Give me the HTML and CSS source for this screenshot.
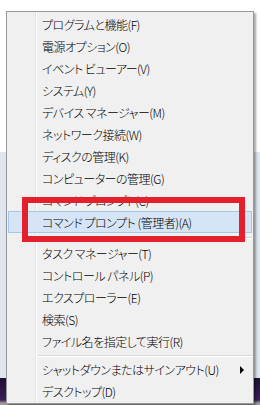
FILE: index.html
```html
<!DOCTYPE html>
<html lang="ja">
<head>
    <meta charset="UTF-8">
    <meta name="viewport" content="width=device-width, initial-scale=1.0">
    <title>クイック リンク メニュー</title>
    <link rel="stylesheet" href="styles.css">
</head>
<body>
    <div class="menu">
        <ul class="group">
            <li class="item">プログラムと機能(F)</li>
            <li class="item">電源オプション(O)</li>
            <li class="item">イベント ビューアー(V)</li>
            <li class="item">システム(Y)</li>
            <li class="item">デバイス マネージャー(M)</li>
            <li class="item">ネットワーク接続(W)</li>
            <li class="item">ディスクの管理(K)</li>
            <li class="item">コンピューターの管理(G)</li>
            <li class="item">コマンド プロンプト(C)</li>
            <li class="item selected">コマンド プロンプト (管理者)(A)</li>
        </ul>
        <div class="separator"></div>
        <ul class="group">
            <li class="item">タスク マネージャー(T)</li>
            <li class="item">コントロール パネル(P)</li>
            <li class="item">エクスプローラー(E)</li>
            <li class="item">検索(S)</li>
            <li class="item">ファイル名を指定して実行(R)</li>
        </ul>
        <div class="separator last"></div>
        <ul class="group">
            <li class="item submenu">シャットダウンまたはサインアウト(U)<span class="arrow"></span></li>
            <li class="item">デスクトップ(D)</li>
        </ul>
        <!-- annotation drawn over the screenshot -->
        <div class="highlight-box"></div>
    </div>
</body>
</html>
```

FILE: styles.css
```css
html, body {
    margin: 0;
    height: 405px;
    overflow: hidden;
}
body {
    padding: 11px 0 0 6px;
    box-sizing: border-box;
    font-family: "Noto Sans CJK JP", "Noto Sans", sans-serif;
    font-size: 12px;
    font-weight: 300;
    font-feature-settings: "palt";
    letter-spacing: -0.5px;
    color: #000;
    background: linear-gradient(to bottom, #fff 0, #fff 152px, #dfe5ec 152px, #dfe5ec 378px, #1c1030 378px, #3a1e5a 400px, #9a9a9a 403px);
}
.menu {
    position: relative;
    width: 248px;
    box-sizing: border-box;
    background: #f0f0f0;
    border: 1px solid #979797;
    padding: 1px;
    box-shadow: 2px 2px 2px rgba(0,0,0,0.35);
    background-image: linear-gradient(to right, transparent 28px, #e2e3e3 28px, #e2e3e3 29px, #fff 29px, #fff 30px, transparent 30px);
}
.group {
    list-style: none;
    margin: 0;
    padding: 0;
}
.item {
    position: relative;
    height: 22px;
    line-height: 21px;
    padding-left: 33px;
    white-space: nowrap;
    border: 1px solid transparent;
    box-sizing: border-box;
}
.item.selected {
    background: #d5e5f6;
    border-color: #a3c6ea;
}
.separator {
    height: 0;
    margin: 4px 0 3px 30px;
    border-top: 1px solid #d7d7d7;
    border-bottom: 1px solid #fff;
}
.separator.last {
    margin: 3px 0 1px 30px;
}
.arrow {
    position: absolute;
    right: 7px;
    top: 7px;
    width: 0;
    height: 0;
    border-top: 4px solid transparent;
    border-bottom: 4px solid transparent;
    border-left: 4px solid #000;
}
.highlight-box {
    position: absolute;
    left: 15px;
    top: 185px;
    width: 223px;
    height: 45px;
    box-sizing: border-box;
    border: 6px solid #e3202b;
}
```
